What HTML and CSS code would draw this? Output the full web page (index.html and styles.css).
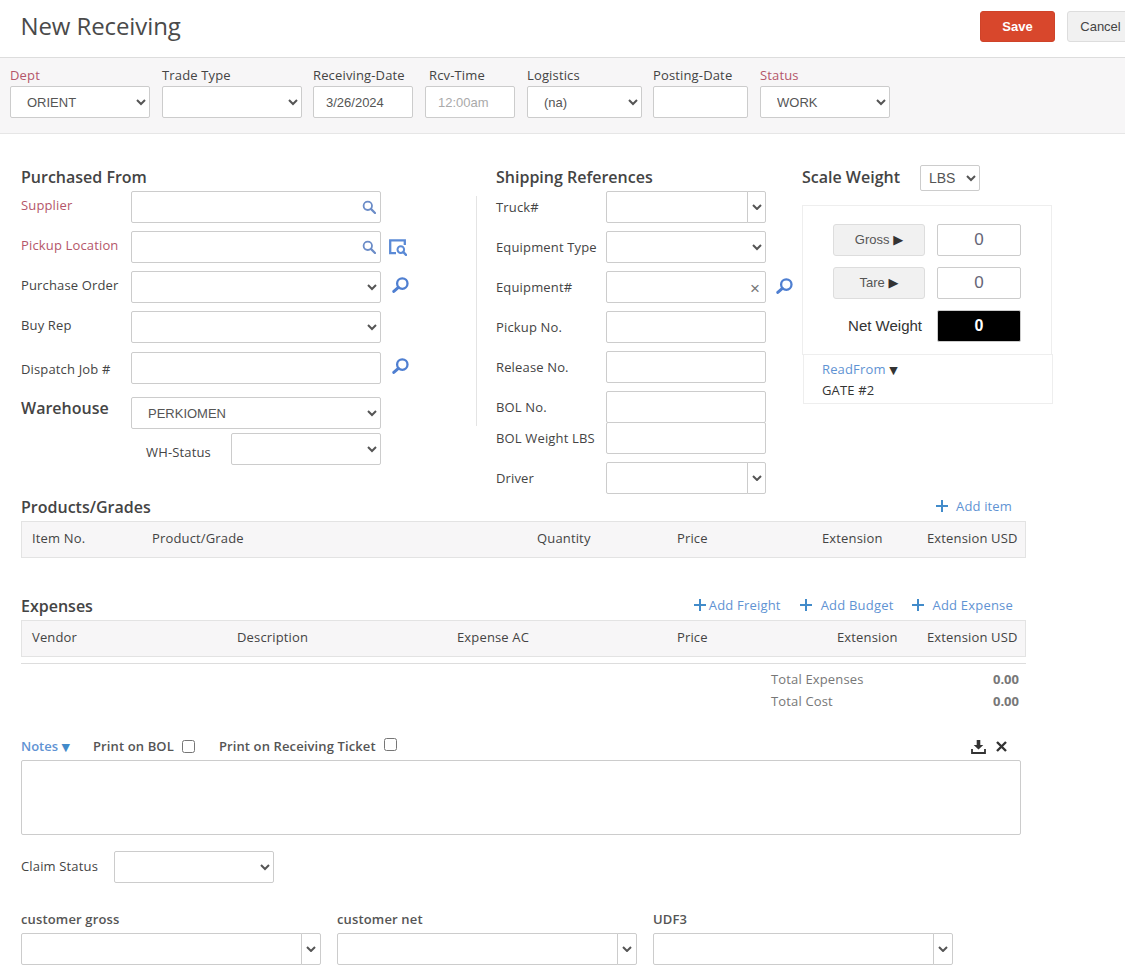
FILE: index.html
```html
<!DOCTYPE html>
<html lang="en">
<head>
<meta charset="utf-8">
<title>New Receiving</title>
<link rel="stylesheet" href="styles.css">
</head>
<body>
<svg class="sprite" width="0" height="0" aria-hidden="true">
  <symbol id="i-search" viewBox="0 0 14 14"><circle cx="5.8" cy="5.8" r="4.2" fill="none" stroke="currentColor" stroke-width="1.8"/><path d="M8.9 8.9 13 13" stroke="currentColor" stroke-width="2.2" stroke-linecap="round"/></symbol>
  <symbol id="i-lookup" viewBox="0 0 17 16"><circle cx="10.3" cy="6.6" r="5.2" fill="none" stroke="currentColor" stroke-width="2.3"/><path d="M6.4 10.4 1.8 14.4" stroke="currentColor" stroke-width="3" stroke-linecap="round"/></symbol>
  <symbol id="i-location" viewBox="0 0 18 17"><path d="M7 14.2H1.2V1.3h14.6V6" fill="none" stroke="currentColor" stroke-width="2.3"/><circle cx="11.8" cy="10.6" r="3.3" fill="none" stroke="currentColor" stroke-width="2"/><path d="m14.4 13.2 2.6 2.6" stroke="currentColor" stroke-width="2.4" stroke-linecap="round"/></symbol>
  <symbol id="i-chev" viewBox="0 0 10 6"><path d="M1 1l4 4 4-4" fill="none" stroke="currentColor" stroke-width="2"/></symbol>
  <symbol id="i-plus" viewBox="0 0 12 12"><path d="M6 0v12M0 6h12" stroke="currentColor" stroke-width="2"/></symbol>
</svg>

<header class="page-head">
  <h1 class="page-title">New Receiving</h1>
  <div class="page-actions">
    <button class="btn btn-save" type="button">Save</button>
    <button class="btn btn-cancel" type="button">Cancel</button>
  </div>
</header>

<section class="toolbar">
  <div class="tool w-140"><label class="tool-label req">Dept</label><select class="ctl pad"><option>ORIENT</option></select></div>
  <div class="tool w-140"><label class="tool-label">Trade Type</label><select class="ctl pad"><option></option></select></div>
  <div class="tool w-100 tight"><label class="tool-label">Receiving-Date</label><input class="ctl pad" value="3/26/2024"></div>
  <div class="tool w-90"><label class="tool-label inset">Rcv-Time</label><input class="ctl pad muted" value="12:00am"></div>
  <div class="tool w-115"><label class="tool-label">Logistics</label><select class="ctl pad"><option>(na)</option></select></div>
  <div class="tool w-95 tight"><label class="tool-label">Posting-Date</label><input class="ctl pad"></div>
  <div class="tool w-130"><label class="tool-label req">Status</label><select class="ctl pad"><option>WORK</option></select></div>
</section>

<section class="form-area">
  <div class="col col-from">
    <h2 class="sec-title">Purchased From</h2>
    <div class="row"><label class="row-label req">Supplier</label><div class="field"><input class="ctl"><svg class="in-icon"><use href="#i-search"/></svg></div></div>
    <div class="row"><label class="row-label req">Pickup Location</label><div class="field"><input class="ctl"><svg class="in-icon"><use href="#i-search"/></svg></div><svg class="side-icon loc"><use href="#i-location"/></svg></div>
    <div class="row"><label class="row-label">Purchase Order</label><div class="field"><select class="ctl"><option></option></select></div><svg class="side-icon"><use href="#i-lookup"/></svg></div>
    <div class="row"><label class="row-label">Buy Rep</label><div class="field"><select class="ctl"><option></option></select></div></div>
    <div class="row row-dispatch"><label class="row-label low">Dispatch Job #</label><div class="field"><input class="ctl"></div><svg class="side-icon"><use href="#i-lookup"/></svg></div>
    <div class="row row-wh"><label class="row-label wh-title">Warehouse</label><div class="field"><select class="ctl pad"><option>PERKIOMEN</option></select></div></div>
    <div class="row row-whs"><label class="whs-label">WH-Status</label><select class="ctl whs-select"><option></option></select></div>
  </div>

  <div class="vline"></div>

  <div class="col col-ship">
    <h2 class="sec-title">Shipping References</h2>
    <div class="row"><label class="row-label mid">Truck#</label><div class="combo combo-sm w-160"><input class="ctl"><span class="combo-btn"><svg class="chev"><use href="#i-chev"/></svg></span></div></div>
    <div class="row"><label class="row-label mid">Equipment Type</label><div class="field w-160"><select class="ctl"><option></option></select></div></div>
    <div class="row"><label class="row-label mid">Equipment#</label><div class="field w-160"><input class="ctl"><span class="clear">×</span></div><svg class="side-icon ship-look"><use href="#i-lookup"/></svg></div>
    <div class="row"><label class="row-label mid">Pickup No.</label><div class="field w-160"><input class="ctl"></div></div>
    <div class="row"><label class="row-label mid">Release No.</label><div class="field w-160"><input class="ctl"></div></div>
    <div class="row flush"><label class="row-label mid">BOL No.</label><div class="field w-160"><input class="ctl"></div></div>
    <div class="row row-bolw"><label class="row-label mid">BOL Weight LBS</label><div class="field w-160"><input class="ctl"></div></div>
    <div class="row"><label class="row-label mid">Driver</label><div class="combo combo-sm w-160"><input class="ctl"><span class="combo-btn"><svg class="chev"><use href="#i-chev"/></svg></span></div></div>
  </div>

  <div class="col col-scale">
    <div class="scale-head">
      <h2 class="sec-title scale-title">Scale Weight</h2>
      <select class="ctl lbs"><option>LBS</option></select>
    </div>
    <div class="scale-box">
      <div class="scale-row"><button class="btn btn-scale" type="button">Gross <span class="tri">▶</span></button><input class="ctl scale-val" value="0"></div>
      <div class="scale-row"><button class="btn btn-scale" type="button">Tare <span class="tri">▶</span></button><input class="ctl scale-val" value="0"></div>
      <div class="scale-row"><span class="net-label">Net Weight</span><input class="ctl scale-val net" value="0"></div>
    </div>
    <div class="read-box">
      <div class="read-from"><span class="link-text">ReadFrom</span> <span class="read-tri">▼</span></div>
      <div class="read-val">GATE #2</div>
    </div>
  </div>
</section>

<section class="grid-sec products">
  <div class="grid-top">
    <h2 class="sec-title">Products/Grades</h2>
    <div class="adds"><a class="add"><svg class="plus"><use href="#i-plus"/></svg>Add item</a></div>
  </div>
  <div class="grid-head cols-prod">
    <span>Item No.</span><span>Product/Grade</span><span>Quantity</span><span>Price</span><span>Extension</span><span>Extension USD</span>
  </div>
</section>

<section class="grid-sec expenses">
  <div class="grid-top">
    <h2 class="sec-title">Expenses</h2>
    <div class="adds">
      <a class="add add-tight"><svg class="plus"><use href="#i-plus"/></svg>Add Freight</a>
      <a class="add"><svg class="plus"><use href="#i-plus"/></svg>Add Budget</a>
      <a class="add"><svg class="plus"><use href="#i-plus"/></svg>Add Expense</a>
    </div>
  </div>
  <div class="grid-head cols-exp">
    <span>Vendor</span><span>Description</span><span>Expense AC</span><span>Price</span><span>Extension</span><span>Extension USD</span>
  </div>
  <div class="totals">
    <div class="total-row"><span>Total Expenses</span><b>0.00</b></div>
    <div class="total-row"><span>Total Cost</span><b>0.00</b></div>
  </div>
</section>

<section class="notes">
  <div class="notes-bar">
    <span class="notes-title">Notes <span class="notes-tri">▼</span></span>
    <label class="check">Print on BOL <input type="checkbox"></label>
    <label class="check check-up">Print on Receiving Ticket <input type="checkbox"></label>
    <span class="notes-tools">
      <svg class="tool-icon" viewBox="0 0 15 14"><path d="M5.7 0h3.6v5h3L7.5 9.6 2.7 5h3z" fill="currentColor"/><path d="M1 9v4h13V9" fill="none" stroke="currentColor" stroke-width="1.8"/></svg>
      <svg class="tool-icon close" viewBox="0 0 11 11"><path d="M1 1l9 9M10 1l-9 9" stroke="currentColor" stroke-width="2.4"/></svg>
    </span>
  </div>
  <textarea class="ctl notes-text"></textarea>
</section>

<section class="claim">
  <label class="claim-label">Claim Status</label>
  <select class="ctl claim-select"><option></option></select>
</section>

<section class="udf">
  <div class="udf-item"><label class="udf-label">customer gross</label><div class="combo"><input class="ctl"><span class="combo-btn"><svg class="chev"><use href="#i-chev"/></svg></span></div></div>
  <div class="udf-item"><label class="udf-label">customer net</label><div class="combo"><input class="ctl"><span class="combo-btn"><svg class="chev"><use href="#i-chev"/></svg></span></div></div>
  <div class="udf-item"><label class="udf-label">UDF3</label><div class="combo"><input class="ctl"><span class="combo-btn"><svg class="chev"><use href="#i-chev"/></svg></span></div></div>
</section>
</body>
</html>
```

FILE: styles.css
```css
* { box-sizing: border-box; }
html, body { margin: 0; padding: 0; overflow: hidden; height: 100%; background: #fff; }
body { font: 13px/18px "Open Sans", "Liberation Sans", sans-serif; color: #444; letter-spacing: .15px; }
.sprite { position: absolute; }
h1, h2 { margin: 0; }

/* Header */
.page-head { width: 1134px; height: 57px; display: flex; justify-content: space-between; padding: 10px 0 0 20.5px; }
.page-title { font-size: 24px; line-height: 32px; font-weight: 400; color: #4a4a4a; letter-spacing: -.1px; }
.page-actions { display: flex; gap: 12px; padding-top: 1px; }
.btn { font: 13px/18px "Liberation Sans", Arial, sans-serif; cursor: pointer; border-radius: 3px; padding: 0; letter-spacing: 0; }
.btn-save { width: 75px; height: 31px; background: #d8472c; border: 1px solid #cf4329; color: #fff; font-weight: 700; }
.btn-cancel { width: 67px; height: 31px; background: #f1f1f1; border: 1px solid #ddd; color: #444; }

/* Toolbar */
.toolbar { height: 77px; background: #f7f6f7; border-top: 1px solid #ddd; border-bottom: 1px solid #e6e6e6; display: flex; gap: 12px; padding: 8px 0 0 10px; }
.tool { display: flex; flex-direction: column; }
.tight { margin-left: -1px; }
.tool-label { line-height: 18px; height: 20px; color: #444; white-space: nowrap; }
.tool-label.inset { padding-left: 4px; }
.req { color: #b4566a; }
.w-140 { width: 140px; } .w-100 { width: 100px; } .w-90 { width: 90px; }
.w-115 { width: 115px; } .w-95 { width: 95px; } .w-130 { width: 130px; }
.w-160 { width: 160px !important; }

/* Controls */
.ctl { display: block; width: 100%; height: 32px; border: 1px solid #ccc; border-radius: 2px; background: #fff; font: 13px "Liberation Sans", Arial, sans-serif; color: #555; margin: 0; outline: 0; }
.pad { padding-left: 12px; }
.muted { color: #aaa; }
.field { position: relative; width: 250px; }
.in-icon { position: absolute; right: 5px; top: 9px; width: 14px; height: 14px; color: #6b8cc8; }
.side-icon { width: 17px; height: 16px; margin: 6px 0 0 11px; color: #4f7fd1; flex: none; }
.side-icon.loc { width: 18px; height: 17px; margin: 8px 0 0 8px; color: #5b8ad6; }
.side-icon.ship-look { margin: 7px 0 0 10px; }
.clear { position: absolute; right: 6px; top: 9px; font: 17px/17px "Liberation Sans", sans-serif; color: #777; }
.combo { position: relative; display: flex; width: 100%; }
.combo .ctl { flex: 1; min-width: 0; border-radius: 2px 0 0 2px; }
.combo-btn { width: 20px; height: 32px; flex: none; border: 1px solid #ccc; margin-left: -1px; border-radius: 0 2px 2px 0; display: flex; align-items: center; justify-content: center; background: #fff; }
.combo-sm .combo-btn { width: 19px; }
.chev { width: 10px; height: 6px; color: #555; }

/* Form columns */
.form-area { display: flex; padding: 31px 0 0 21px; height: 361px; }
.sec-title { font-size: 16px; line-height: 24px; height: 26px; font-weight: 600; color: #444; white-space: nowrap; letter-spacing: 0; }
.col-from { width: 455px; }
.vline { width: 1px; height: 230px; margin-top: 31px; background: #e4e4e4; flex: none; }
.col-ship { width: 306px; margin-left: 19px; }
.row { display: flex; align-items: flex-start; margin-bottom: 8px; height: 32px; }
.row-label { width: 110px; flex: none; white-space: nowrap; padding-top: 5px; line-height: 18px; }
.row-label.low { padding-top: 8px; }
.row-label.mid { padding-top: 7px; }
.row-dispatch { margin-top: 9px; margin-bottom: 13px; }
.row-wh { margin-bottom: 4px; }
.wh-title { font-size: 16px; font-weight: 600; line-height: 22px; padding-top: 0; letter-spacing: 0; }
.row-whs { padding-left: 125px; }
.whs-label { width: 85px; flex: none; padding-top: 10px; }
.whs-select { width: 150px; }
.flush { margin-bottom: 0; }
.row-bolw { margin-top: -1px; }

/* Scale */
.col-scale { width: 251px; }
.scale-head { display: flex; height: 26px; margin-bottom: 14px; }
.scale-title { width: 118px; }
.lbs { width: 60px; height: 26px; padding-left: 4px; font-size: 14px; }
.scale-box { width: 250px; height: 150px; border: 1px solid #eee; padding: 18px 0 0 30px; display: flex; flex-direction: column; gap: 11px; }
.scale-row { display: flex; gap: 12px; align-items: center; }
.btn-scale { width: 92px; height: 32px; background: #f1f1f1; border: 1px solid #ddd; color: #555; }
.tri { font: 13px/14px "DejaVu Sans", sans-serif; color: #333; }
.scale-val { width: 84px; text-align: center; font-size: 17px; padding-bottom: 2px; color: #667; }
.net-label { width: 92px; padding-right: 3px; text-align: right; color: #333; font: 15px/18px "Liberation Sans", Arial, sans-serif; letter-spacing: 0; }
.net { background: #000; color: #fff; font-weight: 700; font-size: 16px; }
.read-box { width: 250px; height: 50px; margin: -1px 0 0 1px; border: 1px solid #eee; padding: 4px 0 0 18px; }
.read-from { line-height: 20px; }
.link-text { color: #5f93d3; }
.read-tri { font: 11px "DejaVu Sans", sans-serif; color: #333; }
.read-val { line-height: 20px; margin-top: 1px; color: #333; }

/* Grid sections */
.grid-sec { margin-left: 21px; width: 1005px; }
.grid-top { display: flex; justify-content: space-between; }
.adds { display: flex; gap: 18px; padding-right: 13px; line-height: 22px; height: 22px; }
.products .adds { padding-right: 14px; }
.add { display: inline-flex; align-items: center; color: #5f93d3; white-space: nowrap; letter-spacing: .2px; }
.products .add { letter-spacing: .15px; }
.plus { width: 12px; height: 12px; margin-right: 9px; color: #428bca; flex: none; }
.products .plus { margin-right: 8px; }
.add-tight { margin-right: 1px; }
.add-tight .plus { margin-right: 3px; }
.grid-head { height: 37px; background: #f7f6f7; border: 1px solid #e3e3e3; display: grid; align-items: center; padding: 0 0 3px 10px; color: #444; white-space: nowrap; }
.cols-prod { grid-template-columns: 120px 385px 140px 145px 105px 1fr; }
.cols-exp { grid-template-columns: 205px 220px 220px 160px 90px 1fr; }
.products { margin-bottom: 36px; height: 63px; }
.totals { margin-top: 6px; border-top: 1px solid #ddd; padding-top: 4px; }
.total-row { display: flex; justify-content: space-between; width: 998px; padding-left: 750px; line-height: 22px; color: #777; }
.total-row b { font-weight: 700; letter-spacing: 0; }

/* Notes */
.notes { margin: 21px 0 0 21px; width: 1000px; }
.notes-bar { display: flex; height: 27px; align-items: center; line-height: 24px; }
.notes-title { width: 72px; font-weight: 600; color: #5f93d3; letter-spacing: 0; padding-bottom: 2px; }
.notes-tri { font: 11px "DejaVu Sans", sans-serif; color: #428bca; }
.check { display: inline-flex; align-items: center; font-weight: 600; color: #555; white-space: nowrap; margin-right: 24px; letter-spacing: .12px; padding-bottom: 2px; }
.check input { width: 13px; height: 13px; margin: 0 0 0 8px; position: relative; top: 1px; }
.check-up input { top: -1px; }
.notes-tools { margin-left: auto; display: flex; align-items: center; gap: 10px; padding-right: 14px; }
.tool-icon { width: 15px; height: 14px; color: #333; }
.tool-icon.close { width: 11px; height: 11px; }
.notes-text { height: 75px; resize: none; }

.claim { display: flex; margin: 16px 0 0 21px; height: 32px; align-items: center; }
.claim-label { width: 93px; padding-bottom: 2px; }
.claim-select { width: 160px; }

.udf { display: flex; gap: 16px; margin: 25px 0 0 21px; }
.udf-item { width: 300px; }
.udf-label { display: block; height: 25px; line-height: 22px; font-weight: 600; color: #555; letter-spacing: .15px; }
```
